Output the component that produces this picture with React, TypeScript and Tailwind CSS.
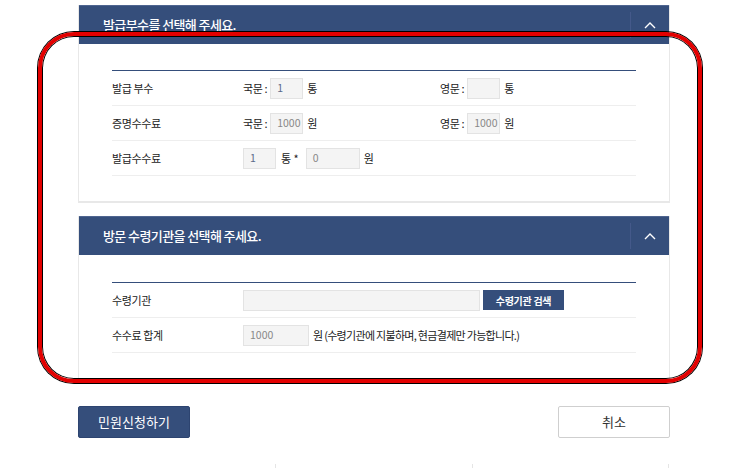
import React from "react";

const font = { fontFamily: '"Noto Sans CJK KR", "Noto Sans", sans-serif' };

function Chevron() {
  return (
    <svg width="12" height="8" viewBox="0 0 12 8" fill="none">
      <path d="M1 7 L6 2 L11 7" stroke="#ffffff" strokeWidth="1.4" />
    </svg>
  );
}

function Header({ title }: { title: string }) {
  return (
    <div className="flex h-[39px] items-stretch justify-between bg-[#354e7b] border-t border-[#4f6590]">
      <div className="flex items-center pl-[24px] text-[13px] font-medium tracking-[-0.6px] text-white">{title}</div>
      <div className="flex items-center">
        <div className="h-[26px] w-px bg-[#44598a]" />
        <div className="flex w-[38px] items-center justify-center">
          <Chevron />
        </div>
      </div>
    </div>
  );
}

function Box({ w, value, color = "#5a6a8a" }: { w: string; value: string; color?: string }) {
  return (
    <div
      className={`flex h-[21px] items-center border border-[#e3e3e3] bg-[#f4f4f4] pl-[6px] text-[10.5px] ${w}`}
      style={{ color }}
    >
      {value}
    </div>
  );
}

function Row({ label, children }: { label: string; children: React.ReactNode }) {
  return (
    <div className="flex h-[35px] items-center border-b border-[#eeeeee]">
      <div className="w-[131px] text-[11px] tracking-[-0.4px] text-[#222]">{label}</div>
      <div className="flex flex-1 items-center text-[#222]">{children}</div>
    </div>
  );
}

export default function App() {
  return (
    <div className="relative h-[468px] w-[750px] overflow-hidden bg-white text-[#222]" style={font}>
      <div className="ml-[78px] w-[592px] pt-[5px]">
        {/* Panel 1 */}
        <div className="border-x border-b-2 border-[#e8e8e8]">
          <Header title="발급부수를 선택해 주세요." />
          <div className="px-[33px] pt-[26px] pb-[25px]">
            <div className="border-t border-[#354e7b]">
              <Row label="발급 부수">
                <div className="flex w-[197px] items-center">
                  <span className="mr-[3px] text-[11px] tracking-[-0.4px]">국문 :</span>
                  <Box w="w-[33px]" value="1" />
                  <span className="ml-[4px] text-[11px]">통</span>
                </div>
                <div className="flex items-center">
                  <span className="mr-[3px] text-[11px] tracking-[-0.4px]">영문 :</span>
                  <Box w="w-[33px]" value="" />
                  <span className="ml-[4px] text-[11px]">통</span>
                </div>
              </Row>
              <Row label="증명수수료">
                <div className="flex w-[197px] items-center">
                  <span className="mr-[3px] text-[11px] tracking-[-0.4px]">국문 :</span>
                  <Box w="w-[33px]" value="1000" color="#888" />
                  <span className="ml-[4px] text-[11px]">원</span>
                </div>
                <div className="flex items-center">
                  <span className="mr-[3px] text-[11px] tracking-[-0.4px]">영문 :</span>
                  <Box w="w-[33px]" value="1000" color="#888" />
                  <span className="ml-[4px] text-[11px]">원</span>
                </div>
              </Row>
              <Row label="발급수수료">
                <Box w="w-[33px]" value="1" />
                <span className="ml-[5px] mr-[7px] text-[11px]">통 *</span>
                <Box w="w-[54px]" value="0" color="#888" />
                <span className="ml-[4px] text-[11px]">원</span>
              </Row>
            </div>
          </div>
        </div>

        {/* Panel 2 */}
        <div className="mt-[13px] border-x border-b-2 border-[#e8e8e8]">
          <Header title="방문 수령기관을 선택해 주세요." />
          <div className="px-[33px] pt-[27px] pb-[26px]">
            <div className="border-t border-[#354e7b]">
              <Row label="수령기관">
                <Box w="w-[237px]" value="" />
                <div className="ml-[3px] flex h-[20px] w-[81px] items-center justify-center bg-[#354e7b] text-[10px] font-bold tracking-[-0.3px] text-white">
                  수령기관 검색
                </div>
              </Row>
              <Row label="수수료 합계">
                <Box w="w-[66px]" value="1000" color="#888" />
                <span className="ml-[4px] text-[11px] tracking-[-0.7px]">원 (수령기관에 지불하며, 현금결제만 가능합니다.)</span>
              </Row>
            </div>
          </div>
        </div>

        {/* Buttons */}
        <div className="mt-[25px] flex justify-between">
          <div className="flex h-[32px] w-[112px] items-center justify-center rounded-[2px] border border-[#2d4470] bg-[#354e7b] text-[13px] text-white">
            민원신청하기
          </div>
          <div className="flex h-[32px] w-[112px] items-center justify-center rounded-[2px] border border-[#cfcfcf] bg-white text-[13px] text-[#333]">
            취소
          </div>
        </div>

        <div className="mt-[26px] flex h-[10px]">
          <div className="w-[197px]" />
          <div className="w-[197px] border-l border-[#e5e5e5]" />
          <div className="w-[197px] border-x border-[#e5e5e5]" />
        </div>
      </div>

      {/* red annotation */}
      <div className="pointer-events-none absolute left-[38px] top-[32px] h-[351px] w-[664px] rounded-[36px] border-[4px] border-[#e30000] shadow-[0_0_0_1px_#000,inset_0_0_0_1px_#000]" />
    </div>
  );
}
